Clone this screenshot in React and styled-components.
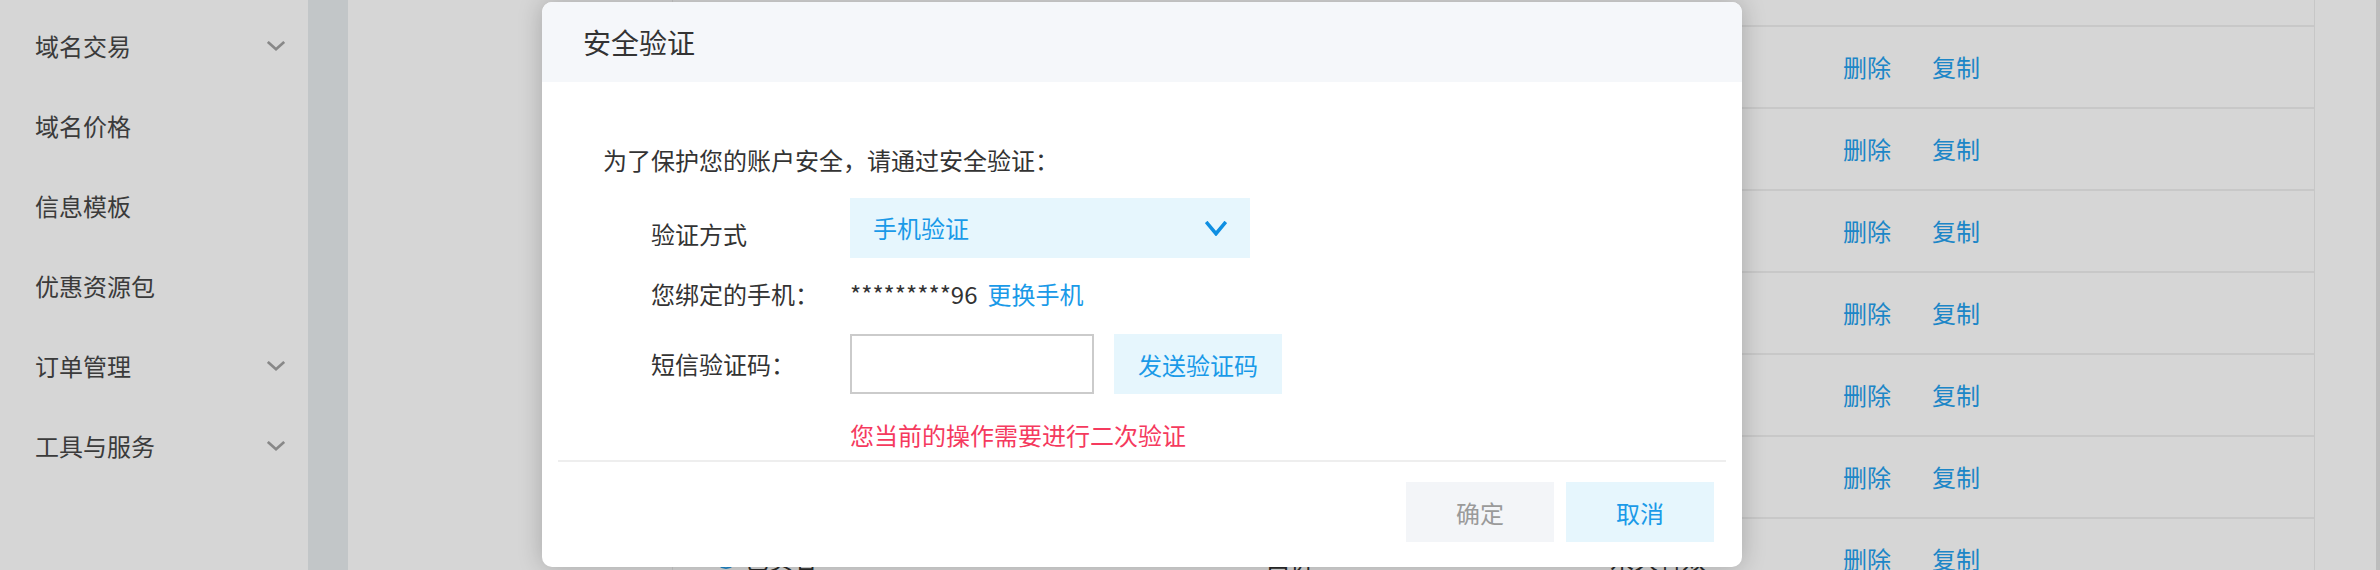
import styled, { createGlobalStyle } from "styled-components";
import { CheckCircle2 } from "lucide-react";

const GlobalStyle = createGlobalStyle`
  html, body {
    margin: 0;
    padding: 0;
    background: #fff;
  }
  body {
    font-family: "Noto Sans CJK SC", "Noto Sans", sans-serif;
    color: #333;
  }
  * {
    box-sizing: border-box;
  }
`;

const BLUE = "#1a9ae8";

const Page = styled.div`
  position: relative;
  display: flex;
  width: 2380px;
  height: 570px;
  overflow: hidden;
  background: #fff;
`;

// left navigation
const Sidebar = styled.nav`
  width: 308px;
  flex-shrink: 0;
  padding-top: 6px;
  background: #fff;
`;

const NavItem = styled.div`
  height: 80px;
  display: flex;
  align-items: center;
  justify-content: space-between;
  padding: 0 23px 0 35px;
  font-size: 24px;
  line-height: 36px;
  color: #474747;
`;

const Gutter = styled.div`
  width: 40px;
  flex-shrink: 0;
  background: #e8ecef;
`;

const Main = styled.main`
  flex: 1;
  display: flex;
  padding: 0 61px 0 324px;
  border-right: 4px solid #e2e2e2;
`;

const Table = styled.div`
  flex: 1;
  display: flex;
  flex-direction: column;
  border-left: 1px solid #eee;
  border-right: 1px solid #eee;
`;

const HeadRow = styled.div`
  height: 27px;
  flex-shrink: 0;
  border-bottom: 2px solid #efefef;
`;

const Row = styled.div`
  height: 82px;
  flex-shrink: 0;
  display: grid;
  grid-template-columns: 527px 368px 233px 1fr;
  align-items: center;
  padding-left: 42px;
  border-bottom: 2px solid #efefef;
  font-size: 24px;
  line-height: 36px;
  color: #333;
`;

const Cell = styled.div`
  display: flex;
  align-items: center;
  gap: 8px;
  color: #333;
`;

const Actions = styled.div`
  display: flex;
  gap: 41px;
`;

const ActionLink = styled.span`
  color: #23a0ee;
`;

// modal
const Mask = styled.div`
  position: absolute;
  inset: 0;
  background: rgba(0, 0, 0, 0.16);
`;

const Dialog = styled.div`
  position: absolute;
  left: 542px;
  top: 2px;
  width: 1200px;
  height: 565px;
  display: flex;
  flex-direction: column;
  background: #fff;
  border-radius: 10px;
  overflow: hidden;
  box-shadow: 0 0 24px rgba(0, 0, 0, 0.22);
`;

const DialogHeader = styled.div`
  height: 80px;
  flex-shrink: 0;
  display: flex;
  align-items: center;
  padding-left: 41px;
  background: #f5f7fa;
  font-size: 28px;
  color: #333;
`;

const DialogBody = styled.div`
  padding: 60px 0 0 61px;
`;

const Intro = styled.p`
  margin: 0;
  font-size: 24px;
  line-height: 36px;
  color: #333;
`;

const Form = styled.div`
  margin-top: 20px;
  padding-left: 48px;
`;

const FieldRow = styled.div`
  display: flex;
  align-items: center;
  margin-top: ${(p) => p.$top || 0}px;
  font-size: 24px;
  line-height: 36px;
`;

const Label = styled.div`
  width: 199px;
  flex-shrink: 0;
  padding-top: ${(p) => p.$nudge || 0}px;
  color: #333;
`;

const Select = styled.div`
  width: 400px;
  height: 60px;
  display: flex;
  align-items: center;
  justify-content: space-between;
  padding: 0 23px;
  background: #e6f6fd;
  color: ${BLUE};
`;

const Masked = styled.span`
  color: #333;
`;

const TextLink = styled.span`
  margin-left: 10px;
  color: ${BLUE};
`;

const CodeInput = styled.input`
  width: 244px;
  height: 60px;
  border: 2px solid #cbcbcb;
  outline: none;
  padding: 0 12px;
  font-size: 24px;
  font-family: inherit;
`;

const Button = styled.button`
  height: 60px;
  width: ${(p) => p.$w}px;
  margin-left: ${(p) => p.$gap || 0}px;
  border: none;
  padding: 0;
  font-family: inherit;
  font-size: 24px;
  background: ${(p) => (p.$muted ? "#f3f5f8" : "#e6f6fd")};
  color: ${(p) => (p.$muted ? "#9a9a9a" : BLUE)};
`;

const ErrorText = styled.div`
  padding-left: 199px;
  color: #f53a5e;
`;

const Divider = styled.hr`
  margin: 7px 16px 0;
  height: 2px;
  border: none;
  background: #eeeeee;
`;

const Footer = styled.div`
  display: flex;
  justify-content: flex-end;
  gap: 12px;
  padding: 20px 28px 25px;
`;

const Chevron = ({ w, h, color, stroke }) => (
  <svg width={w} height={h} viewBox={`0 0 ${w} ${h}`} fill="none">
    <polyline
      points={`${stroke / 2 + 0.5},${stroke / 2 + 0.5} ${w / 2},${h - stroke / 2 - 0.5} ${w - stroke / 2 - 0.5},${stroke / 2 + 0.5}`}
      stroke={color}
      strokeWidth={stroke}
      strokeLinecap="square"
      strokeLinejoin="miter"
    />
  </svg>
);

const navItems = [
  { label: "域名交易", sub: true },
  { label: "域名价格" },
  { label: "信息模板" },
  { label: "优惠资源包" },
  { label: "订单管理", sub: true },
  { label: "工具与服务", sub: true },
];

// only the last row peeks out below the dialog, the rest sit behind it
const rows = [
  { id: 1 },
  { id: 2 },
  { id: 3 },
  { id: 4 },
  { id: 5 },
  { id: 6 },
  { id: 7, status: "已实名", type: "一口价", term: "永久有效" },
];

const App = () => {
  return (
    <>
      <GlobalStyle />
      <Page>
        <Sidebar>
          {navItems.map((item) => (
            <NavItem key={item.label}>
              <span>{item.label}</span>
              {item.sub && <Chevron w={18} h={10} color="#a3a3a3" stroke={2.6} />}
            </NavItem>
          ))}
        </Sidebar>
        <Gutter />
        <Main>
          <Table>
            <HeadRow />
            {rows.map((r) => (
              <Row key={r.id}>
                <Cell>
                  {r.status && <CheckCircle2 size={22} color="#23a0ee" />}
                  {r.status}
                </Cell>
                <Cell>{r.type}</Cell>
                <Cell>{r.term}</Cell>
                <Actions>
                  <ActionLink>删除</ActionLink>
                  <ActionLink>复制</ActionLink>
                </Actions>
              </Row>
            ))}
          </Table>
        </Main>

        <Mask>
          <Dialog>
            <DialogHeader>安全验证</DialogHeader>
            <DialogBody>
              <Intro>为了保护您的账户安全，请通过安全验证：</Intro>
              <Form>
                <FieldRow>
                  <Label $nudge={11}>验证方式</Label>
                  <Select>
                    <span>手机验证</span>
                    <Chevron w={22} h={15} color="#0f8fe2" stroke={3.6} />
                  </Select>
                </FieldRow>
                <FieldRow $top={18}>
                  <Label>您绑定的手机：</Label>
                  <Masked>*********96</Masked>
                  <TextLink>更换手机</TextLink>
                </FieldRow>
                <FieldRow $top={22}>
                  <Label>短信验证码：</Label>
                  <CodeInput type="text" />
                  <Button $w={168} $gap={20}>发送验证码</Button>
                </FieldRow>
                <FieldRow $top={23}>
                  <ErrorText>您当前的操作需要进行二次验证</ErrorText>
                </FieldRow>
              </Form>
            </DialogBody>
            <Divider />
            <Footer>
              <Button $w={148} $muted>确定</Button>
              <Button $w={148}>取消</Button>
            </Footer>
          </Dialog>
        </Mask>
      </Page>
    </>
  );
};

export default App;
